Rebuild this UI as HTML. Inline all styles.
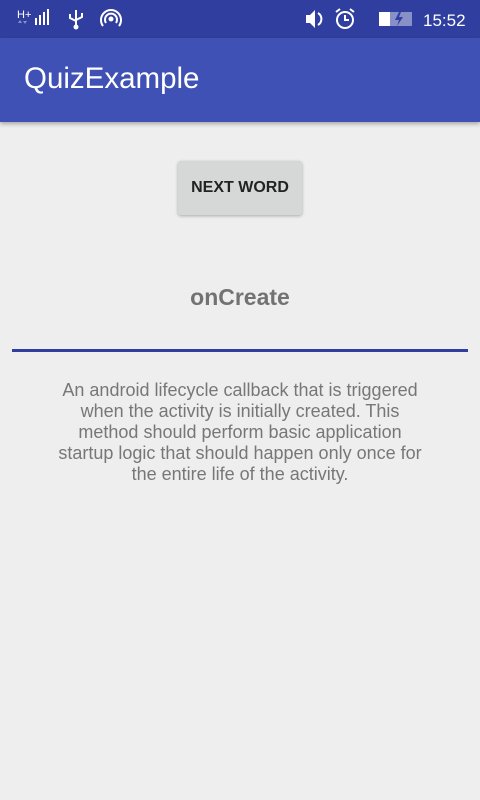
<!DOCTYPE html>
<html><head><meta charset="utf-8"><style>
body{margin:0;width:480px;height:800px;background:#eeeeee;font-family:"Liberation Sans",sans-serif;position:relative;overflow:hidden}
.sb{position:absolute;top:0;left:0;width:480px;height:38px;background:#303f9f;color:#fff}
.ab{position:absolute;top:38px;left:0;width:480px;height:84px;background:#3f51b5;box-shadow:0 2px 4px rgba(0,0,0,.3)}
.ab span{position:absolute;left:24px;top:24px;font-size:29.5px;color:#fff}
.btn{position:absolute;left:178px;top:161px;width:124px;height:54px;background:#d6d7d7;border-radius:3px;box-shadow:0 1px 3px rgba(0,0,0,.3);font-size:16px;font-weight:bold;color:#222;text-align:center;line-height:54px}
.w{position:absolute;top:284px;width:480px;text-align:center;font-size:23px;font-weight:bold;color:#727272}
.ln{position:absolute;left:12px;top:349px;width:456px;height:3px;background:#303f9f}
.d{position:absolute;top:380px;left:0;width:480px;text-align:center;font-size:18px;line-height:21px;color:#777;white-space:nowrap}
</style></head><body>
<div class="sb">
<svg width="480" height="38" style="position:absolute;left:0;top:0">
<text x="17" y="18" font-size="11" fill="#fff" font-family="Liberation Sans">H+</text>
<g fill="#fff"><rect x="35" y="18" width="2" height="7"/><rect x="39" y="15" width="2" height="10"/><rect x="43" y="12" width="2" height="13"/><rect x="47" y="9" width="2" height="16"/></g>
<g fill="#8890c8"><path d="M18 23l2-3 2 3zM23 21l2 3 2-3z"/></g>
<path d="M76 10v16M70 14v4l6 3M82 13v4l-6 3" stroke="#fff" stroke-width="2" fill="none"/><circle cx="76" cy="27" r="2.5" fill="#fff"/>
<circle cx="111" cy="19" r="2.5" fill="#fff"/><path d="M106 23a6 6 0 1 1 10 0M103 26a10 10 0 1 1 16 0" stroke="#fff" stroke-width="2" fill="none"/>
<path d="M306 15h4l5-5v18l-5-5h-4z" fill="#fff"/><path d="M318 13a7 7 0 0 1 0 12" stroke="#fff" stroke-width="2" fill="none"/>
<circle cx="345" cy="20" r="8" stroke="#fff" stroke-width="2" fill="none"/><path d="M345 15v5h4M336 12l4-3M354 12l-4-3" stroke="#fff" stroke-width="2" fill="none"/>
<rect x="379" y="12" width="33" height="14" fill="#8890c8"/><rect x="379" y="12" width="11" height="14" fill="#fff"/><path d="M399 12l-4 8h4l-2 6 6-9h-4l2-5z" fill="#303f9f"/>
<text x="423" y="26" font-size="17" fill="#fff" font-family="Liberation Sans">15:52</text>
</svg></div>
<div class="ab"><span>QuizExample</span></div>
<div class="btn">NEXT WORD</div>
<div class="w">onCreate</div>
<div class="ln"></div>
<div class="d">An android lifecycle callback that is triggered<br>when the activity is initially created. This<br>method should perform basic application<br>startup logic that should happen only once for<br>the entire life of the activity.</div>
</body></html>
